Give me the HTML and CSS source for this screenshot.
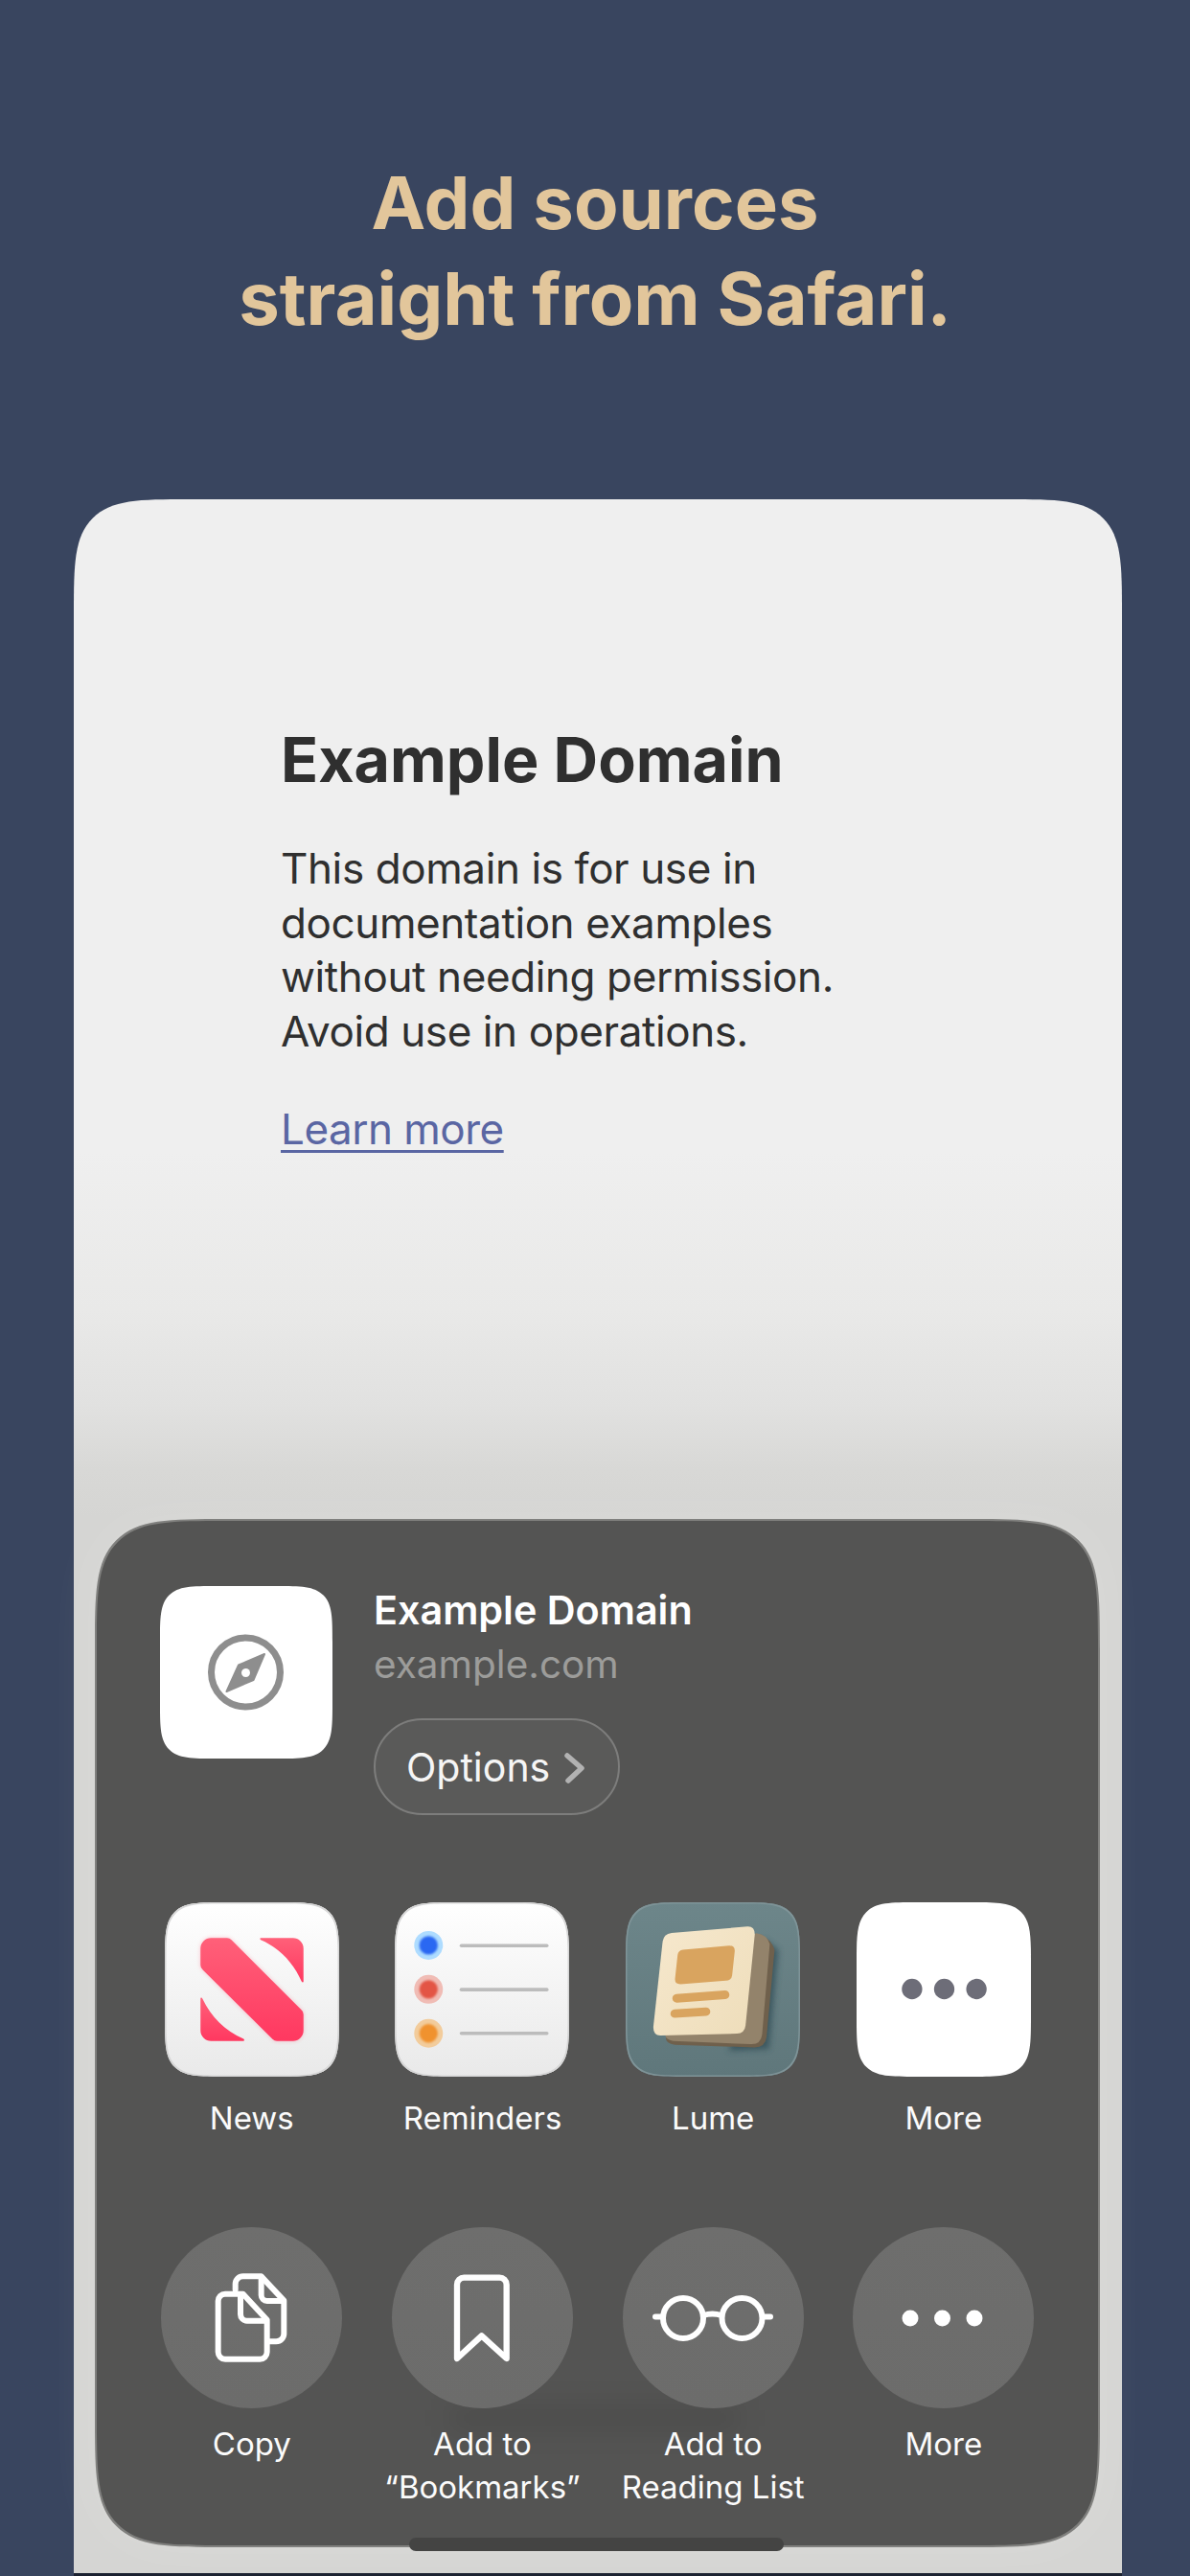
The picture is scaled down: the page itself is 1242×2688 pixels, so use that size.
FILE: index.html
```html
<!DOCTYPE html>
<html lang="en">
<head>
<meta charset="utf-8">
<title>Add sources straight from Safari</title>
<link rel="stylesheet" href="styles.css">
</head>
<body>
<main class="page">
  <h1 class="headline">Add sources<br>straight from Safari.</h1>
  <section class="card">
    <article class="web">
      <h2 class="web-title">Example Domain</h2>
      <p class="web-text">This domain is for use in<br>documentation examples<br>without needing permission.<br>Avoid use in operations.</p>
      <a class="web-link" href="#">Learn more</a>
    </article>
    <section class="sheet">
      <div class="ghost"></div>
      <header class="sheet-head">
        <div class="site-icon">
          <svg viewBox="0 0 180 180" width="180" height="180">
            <circle cx="89.5" cy="90" r="36" fill="none" stroke="#8e8e8e" stroke-width="7"/>
            <polygon points="109,71 97.5,98 69.5,110 82,82.5" fill="#8e8e8e" stroke="#8e8e8e" stroke-width="2" stroke-linejoin="round"/>
            <circle cx="89.5" cy="90.5" r="4.5" fill="#fff"/>
          </svg>
        </div>
        <div class="site-info">
          <div class="site-name">Example Domain</div>
          <div class="site-url">example.com</div>
          <button class="options">Options
            <svg class="chev" viewBox="0 0 24 32" width="24" height="32"><path d="M4 3 L19 16 L5 29" fill="none" stroke="#b2b2b2" stroke-width="5.5" stroke-linecap="round" stroke-linejoin="round"/></svg>
          </button>
        </div>
      </header>

      <div class="apps">
        <div class="item">
          <div class="app app-news">
            <svg viewBox="95 75 543 547" width="182" height="182">
              <defs>
                <linearGradient id="pink" x1="0" y1="0" x2="0" y2="1"><stop offset="0" stop-color="#ff6079"/><stop offset="1" stop-color="#ff3860"/></linearGradient>
                <filter id="soft" x="-10%" y="-10%" width="120%" height="120%"><feGaussianBlur stdDeviation="6"/></filter>
              </defs>
              <g filter="url(#soft)" opacity=".3" fill="#ff4a68"><path d="M205 220a33 33 0 0 1 33-33h50a20 20 0 0 1 14 6L520 411a20 20 0 0 1 8 16v50a33 33 0 0 1-33 33h-50a20 20 0 0 1-14-6L213 288a20 20 0 0 1-8-16z"/></g>
              <path fill="url(#pink)" d="M205 220a33 33 0 0 1 33-33h50a20 20 0 0 1 14 6L520 411a20 20 0 0 1 8 16v50a33 33 0 0 1-33 33h-50a20 20 0 0 1-14-6L213 288a20 20 0 0 1-8-16z"/>
              <path fill="url(#pink)" d="M394 187h101a33 33 0 0 1 33 33v103c0 4-4 4-6 0-26-58-68-104-128-130-3-2-3-6 0-6z"/>
              <path fill="url(#pink)" d="M205 378c0-5 4-6 6-1 28 58 70 100 129 126 4 2 3 7-1 7H238a33 33 0 0 1-33-33z"/>
            </svg>
          </div>
          <span class="label">News</span>
        </div>
        <div class="item">
          <div class="app app-rem">
            <svg viewBox="815 75 545 547" width="182" height="182">
              <defs><filter id="dot" x="-30%" y="-30%" width="160%" height="160%"><feGaussianBlur stdDeviation="3.5"/></filter></defs>
              <circle cx="920" cy="210" r="45" fill="#aedcff"/><circle cx="920" cy="210" r="29" fill="#2a68f2" filter="url(#dot)"/>
              <circle cx="920" cy="348" r="45" fill="#f0bcb5"/><circle cx="920" cy="348" r="29" fill="#e35544" filter="url(#dot)"/>
              <circle cx="920" cy="486" r="45" fill="#f2cc9c"/><circle cx="920" cy="486" r="29" fill="#f0922f" filter="url(#dot)"/>
              <g stroke="#bcbcbc" stroke-width="11" stroke-linecap="round">
                <line x1="1023" y1="211" x2="1291" y2="211"/>
                <line x1="1023" y1="349" x2="1291" y2="349"/>
                <line x1="1023" y1="486" x2="1291" y2="486"/>
              </g>
            </svg>
          </div>
          <span class="label">Reminders</span>
        </div>
        <div class="item">
          <div class="app app-lume">
            <svg viewBox="97 75 545 547" width="182" height="182">
              <defs>
                <linearGradient id="paper" x1="0" y1="0" x2="1" y2="1"><stop offset="0" stop-color="#f6e8cd"/><stop offset="1" stop-color="#eeddba"/></linearGradient>
                <filter id="sh" x="-20%" y="-20%" width="140%" height="140%"><feGaussianBlur stdDeviation="9"/></filter>
              </defs>
              <path d="M530 190 L575 225 L545 535 L420 540 Z" fill="#2e4c55" opacity=".75" filter="url(#sh)"/>
              <path d="M520 176 Q556 196 563 225 L538 498 Q534 530 500 530 L250 522 Q222 518 222 500 L300 300 Z" fill="#6f604c"/>
              <path d="M505 172 Q540 176 548 206 L524 490 Q520 522 488 520 L245 510 Q222 506 220 492 L300 300 Z" fill="#93836b"/>
              <path d="M240 171 L478 151 Q501 150 501 176 L472 462 Q469 486 445 487 L205 493 Q181 492 183 464 L212 198 Q215 174 240 171 Z" fill="url(#paper)"/>
              <path d="M276 224 L420 211 Q440 210 438 230 L430 304 Q428 320 410 321 L268 332 Q249 332 251 314 L259 240 Q261 226 276 224 Z" fill="#d9a45f"/>
              <line x1="256" y1="376" x2="408" y2="365" stroke="#d9a45f" stroke-width="27" stroke-linecap="round"/>
              <line x1="250" y1="424" x2="348" y2="418" stroke="#d9a45f" stroke-width="27" stroke-linecap="round"/>
            </svg>
          </div>
          <span class="label">Lume</span>
        </div>
        <div class="item">
          <div class="app app-more">
            <svg viewBox="818 75 547 547" width="182" height="182">
              <circle cx="992" cy="347" r="32" fill="#6d6d78"/><circle cx="1093" cy="347" r="32" fill="#6d6d78"/><circle cx="1194" cy="347" r="32" fill="#6d6d78"/>
            </svg>
          </div>
          <span class="label">More</span>
        </div>
      </div>

      <div class="actions">
        <div class="item">
          <div class="round">
            <svg viewBox="83 72 567 567" width="189" height="189" fill="none" stroke="#fff" stroke-width="18" stroke-linejoin="round" stroke-linecap="round">
              <path d="M340 281H284a22 22 0 0 0-22 22V463a22 22 0 0 0 22 22H393a22 22 0 0 0 22-22V362Z"/>
              <path d="M332 283V345a20 20 0 0 0 20 20H412"/>
              <path d="M316 268V250a24 24 0 0 1 24-24H397L468 302V406a24 24 0 0 1-24 24H418"/>
              <path d="M397 228V285a18 18 0 0 0 18 18H466"/>
            </svg>
          </div>
          <span class="label">Copy</span>
        </div>
        <div class="item">
          <div class="round">
            <svg viewBox="805 72 567 567" width="189" height="189" fill="none" stroke="#fff" stroke-width="19" stroke-linejoin="round">
              <path d="M1009 483V252a22 22 0 0 1 22-22H1142a22 22 0 0 1 22 22V483L1086 412Z"/>
            </svg>
          </div>
          <span class="label">Add to<br>“Bookmarks”</span>
        </div>
        <div class="item">
          <div class="round">
            <svg viewBox="0 0 189 189" width="189" height="189" fill="none" stroke="#fff" stroke-width="6" stroke-linecap="round">
              <circle cx="63" cy="95" r="21"/>
              <circle cx="124.5" cy="95" r="21"/>
              <path d="M34 93.5H42"/>
              <path d="M146 93.5H154"/>
              <path d="M84 92Q93.5 89 103 92"/>
            </svg>
          </div>
          <span class="label">Add to<br>Reading List</span>
        </div>
        <div class="item">
          <div class="round">
            <svg viewBox="0 0 189 189" width="189" height="189" fill="#fff">
              <circle cx="60" cy="95" r="8.5"/><circle cx="93.5" cy="95" r="8.5"/><circle cx="127" cy="95" r="8.5"/>
            </svg>
          </div>
          <span class="label">More</span>
        </div>
      </div>
      <div class="home-bar"></div>
    </section>
  </section>
</main>
</body>
</html>
```
FILE: styles.css
```css
* { box-sizing: border-box; }
html, body { margin: 0; padding: 0; }
body {
  width: 1242px;
  height: 2688px;
  overflow: hidden;
  background: #39455f;
  font-family: "Inter", "Liberation Sans", sans-serif;
}
.page { display: flex; flex-direction: column; height: 2688px; }

.headline {
  margin: 161px 0 160px;
  text-align: center;
  font-size: 76px;
  line-height: 100px;
  font-weight: 700;
  color: #e2c69b;
}

.card {
  width: 1094px;
  height: 2167px;
  margin-left: 77px;
  display: flex;
  flex-direction: column;
  border-bottom: 3px solid #1b2130;
  border-radius: 124px 124px 0 0;
  corner-shape: squircle;
  background: linear-gradient(#efefef 0, #efefef 680px, #e9e9e8 846px, #e1e1e0 946px, #d8d8d6 1012px, #d5d5d3 1062px, #d5d5d3 100%);
}

.web { padding: 232px 0 0 216px; color: #2f2f2f; }
.web-title { margin: 0 0 45px; font-size: 64.5px; line-height: 80px; font-weight: 700; }
.web-text { margin: 0 0 46px; font-size: 44px; line-height: 56.5px; font-weight: 400; letter-spacing: -0.4px; }
.web-link { font-size: 44px; line-height: 56.5px; letter-spacing: -0.5px; color: #5a66a3; text-decoration: underline; text-decoration-thickness: 3px; text-underline-offset: 6px; }

.sheet {
  position: relative;
  width: 1049px;
  height: 1073px;
  margin: auto 0 27px 22px;
  padding: 68px 0 0 41.5px;
  background: #545453;
  border: 2px solid #80807e;
  border-radius: 140px;
  corner-shape: squircle;
  box-shadow: 0 0 50px rgba(255, 255, 255, .12);
  color: #fff;
}
.ghost {
  position: absolute;
  left: 370px;
  top: 925px;
  width: 300px;
  height: 22px;
  background: rgba(0, 0, 0, .1);
  filter: blur(14px);
}
.sheet-head { position: relative; display: flex; gap: 43px; padding-left: 24.5px; }
.site-icon {
  width: 180px;
  height: 180px;
  background: #fff;
  border-radius: 60px;
  corner-shape: squircle;
}
.site-icon svg { display: block; }
.site-info { display: flex; flex-direction: column; align-items: flex-start; padding-top: 1px; }
.site-name { font-size: 41.3px; line-height: 48px; font-weight: 600; color: #fff; }
.site-url { margin-top: 9px; font-size: 40.5px; line-height: 48px; font-weight: 400; color: #9c9c9a; }
.options {
  display: flex;
  align-items: center;
  gap: 14px;
  height: 101px;
  width: 257px;
  margin-top: 32px;
  padding: 0 0 0 32px;
  font: 400 41px "Inter", "Liberation Sans", sans-serif;
  color: #f5f5f5;
  background: #5a5a59;
  border: 2px solid #7d7d7c;
  border-radius: 51px;
}
.chev { flex: none; margin-top: 2px; }

.apps, .actions {
  position: relative;
  display: grid;
  grid-template-columns: repeat(4, 240.67px);
}
.apps { margin-top: 91px; }
.actions { margin-top: 91px; }
.item { display: flex; flex-direction: column; align-items: center; }
.label {
  font-size: 33px;
  line-height: 45px;
  font-weight: 400;
  color: #fbfbfb;
  text-align: center;
  white-space: nowrap;
}
.app {
  width: 182px;
  height: 182px;
  margin-bottom: 21px;
  border-radius: 64px;
  corner-shape: squircle;
  overflow: hidden;
}
.app svg, .round svg { display: block; }
.app-news, .app-rem { background: linear-gradient(#ffffff, #e9e9e9); box-shadow: inset 0 0 0 1.5px #d6d6d6; }
.app-lume { background: linear-gradient(#6d868a, #5f777b); box-shadow: inset 0 0 0 1.5px #7f9498; }
.app-more { background: #fff; }
.round {
  width: 189px;
  height: 189px;
  margin-bottom: 15px;
  border-radius: 50%;
  background: linear-gradient(#6e6e6d, #6c6c6b);
}
.home-bar {
  position: absolute;
  left: 326px;
  bottom: -6px;
  width: 391px;
  height: 14px;
  border-radius: 7px;
  background: #444443;
}
```
